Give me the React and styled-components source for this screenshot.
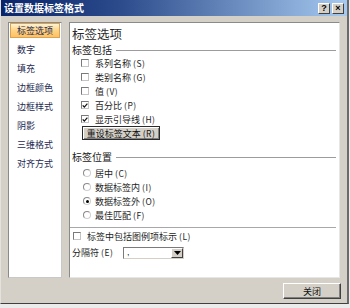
import React from "react";
import styled, { createGlobalStyle } from "styled-components";

const GlobalStyle = createGlobalStyle`
  html, body {
    margin: 0;
    padding: 0;
    background: #ebebeb;
  }
  body {
    font-family: "Noto Sans CJK SC", "Liberation Sans", sans-serif;
    color: #1c1c1c;
  }
  * {
    box-sizing: border-box;
  }
`;

const navItems = ["标签选项", "数字", "填充", "边框颜色", "边框样式", "阴影", "三维格式", "对齐方式"];

const includeOptions = [
  { label: "系列名称", key: "S", checked: false },
  { label: "类别名称", key: "G", checked: false },
  { label: "值", key: "V", checked: false },
  { label: "百分比", key: "P", checked: true },
  { label: "显示引导线", key: "H", checked: true },
];

const positions = [
  { label: "居中", key: "C", selected: false },
  { label: "数据标签内", key: "I", selected: false },
  { label: "数据标签外", key: "O", selected: true },
  { label: "最佳匹配", key: "F", selected: false },
];

function CheckBox({ checked }) {
  return (
    <Box>
      {checked && (
        <svg width="7" height="7" viewBox="0 0 7 7">
          <path d="M0.8 3.4 L2.7 5.3 L6.3 1.2" fill="none" stroke="#111" strokeWidth="1.4" />
        </svg>
      )}
    </Box>
  );
}

function Radio({ selected }) {
  return <RadioDot>{selected && <Dot />}</RadioDot>;
}

function Key({ k }) {
  return <Mnemonic>({k})</Mnemonic>;
}

export default function App() {
  return (
    <>
      <GlobalStyle />
      <Window>
        <TitleBar>
          <TitleText>设置数据标签格式</TitleText>
          <TitleButtons>
            <TitleButton>?</TitleButton>
            <TitleButton>×</TitleButton>
          </TitleButtons>
        </TitleBar>

        <Body>
          <Nav>
            {navItems.map((item, i) => (
              <NavItem key={item}>
                <NavPill $active={i === 0}>{item}</NavPill>
              </NavItem>
            ))}
          </Nav>

          <Panel>
            <PanelTitle>标签选项</PanelTitle>

            <GroupHeader $top={2}>标签包括</GroupHeader>
            {includeOptions.map((o) => (
              <OptionRow key={o.key}>
                <CheckBox checked={o.checked} />
                <span>
                  {o.label}
                  <Key k={o.key} />
                </span>
              </OptionRow>
            ))}
            <ResetButton>
              重设标签文本<Key k="R" />
            </ResetButton>

            <GroupHeader $top={11}>标签位置</GroupHeader>
            <RadioList>
              {positions.map((p) => (
                <OptionRow key={p.key}>
                  <Radio selected={p.selected} />
                  <span>
                    {p.label}
                    <Key k={p.key} />
                  </span>
                </OptionRow>
              ))}
            </RadioList>

            <Separator />

            <LegendRow>
              <CheckBox checked={false} />
              <span>
                标签中包括图例项标示<Key k="L" />
              </span>
            </LegendRow>

            <FieldRow>
              <FieldLabel>
                分隔符<Key k="E" />
              </FieldLabel>
              <Combo>
                <ComboValue>,</ComboValue>
                <ComboArrow>
                  <svg width="7" height="4" viewBox="0 0 7 4">
                    <path d="M0 0 H7 L3.5 4 Z" fill="#000" />
                  </svg>
                </ComboArrow>
              </Combo>
            </FieldRow>
          </Panel>
        </Body>

        <Footer>
          <CloseButton>关闭</CloseButton>
        </Footer>
      </Window>
    </>
  );
}

const Window = styled.div`
  display: flex;
  flex-direction: column;
  width: 349px;
  background: #d4d0c8;
  border-left: 1px solid #e4e2dc;
  border-right: 2px solid #6a6a6a;
  border-bottom: 1px solid #404040;
  padding-bottom: 4px;
`;

//Title
const TitleBar = styled.div`
  display: flex;
  height: 16px;
  padding: 0 3px 0 3px;
  align-items: center;
  justify-content: space-between;
  background: linear-gradient(90deg, #0a246a 0%, #2c4c8c 35%, #a6caf0 100%);
`;

const TitleText = styled.div`
  color: #fff;
  font-size: 10px;
  font-weight: 700;
  line-height: 16px;
`;

const TitleButtons = styled.div`
  display: flex;
  gap: 2px;
  align-items: center;
`;

const TitleButton = styled.div`
  display: flex;
  width: 12px;
  height: 11px;
  align-items: center;
  justify-content: center;
  background: #d4d0c8;
  border-top: 1px solid #fff;
  border-left: 1px solid #fff;
  border-right: 1px solid #404040;
  border-bottom: 1px solid #404040;
  font-family: "Liberation Sans", sans-serif;
  font-size: 9px;
  font-weight: 700;
  line-height: 9px;
  color: #000;
`;

//Body
const Body = styled.div`
  display: flex;
  gap: 7px;
  padding: 6px 7px 0 7px;
`;

const Nav = styled.div`
  display: flex;
  flex-direction: column;
  width: 54px;
  height: 256px;
  background: #fff;
  border: 1px solid #8a8a8a;
  border-right-color: #c8c8c8;
  border-bottom-color: #c8c8c8;
`;

const NavItem = styled.div`
  display: flex;
  height: 19px;
  align-items: flex-start;
`;

const NavPill = styled.div`
  flex: 1;
  height: 15px;
  margin: 0 1px;
  padding-left: 6px;
  font-size: 9px;
  line-height: 13px;
  color: #1d2a52;
  border: 1px solid ${(p) => (p.$active ? "#d9a355" : "transparent")};
  background: ${(p) =>
    p.$active ? "linear-gradient(#fff2d0 0%, #ffd58a 45%, #ffc060 100%)" : "transparent"};
`;

const Panel = styled.div`
  display: flex;
  flex-direction: column;
  flex: 1;
  height: 256px;
  padding: 2px 3px 0 2px;
  background: #fff;
  border: 1px solid #8a8a8a;
  border-right-color: #e6e6e6;
  border-bottom-color: #e6e6e6;
`;

const PanelTitle = styled.div`
  height: 17px;
  font-size: 12.5px;
  line-height: 17px;
  color: #2a2a2a;
`;

const GroupHeader = styled.div`
  display: flex;
  align-items: center;
  gap: 4px;
  height: 12px;
  margin-top: ${(p) => p.$top || 0}px;
  font-size: 10px;
  line-height: 12px;
  color: #222;

  &::after {
    content: "";
    flex: 1;
    height: 1px;
    background: #9c9c9c;
  }
`;

const OptionRow = styled.div`
  display: flex;
  height: 14px;
  align-items: center;
  gap: 6px;
  padding-left: 9px;
  font-size: 9px;
  color: #1c1c1c;

  &:first-of-type {
    margin-top: 1px;
  }
`;

const Mnemonic = styled.span`
  padding-left: 2px;
  letter-spacing: 0.5px;
  font-size: 8.5px;
`;

const Box = styled.div`
  display: flex;
  width: 8px;
  height: 8px;
  align-items: center;
  justify-content: center;
  background: #fff;
  border: 1px solid #7a7a7a;
  border-right-color: #c4c4c4;
  border-bottom-color: #c4c4c4;
`;

const RadioDot = styled.div`
  display: flex;
  width: 8px;
  height: 8px;
  margin-left: 1px;
  margin-right: -1px;
  align-items: center;
  justify-content: center;
  border-radius: 50%;
  background: #fff;
  border: 1px solid #8a8a8a;
  border-right-color: #d0d0d0;
  border-bottom-color: #d0d0d0;
`;

const Dot = styled.div`
  width: 3px;
  height: 3px;
  border-radius: 50%;
  background: #000;
`;

const ResetButton = styled.div`
  display: flex;
  width: 78px;
  height: 14px;
  margin-left: 10px;
  align-items: center;
  justify-content: center;
  background: #d4d0c8;
  border: 1px solid #2a2a2a;
  box-shadow: inset 1px 1px 0 #fff, inset -1px -1px 0 #808080;
  font-size: 9px;
  color: #111;
`;

const RadioList = styled.div`
  display: flex;
  flex-direction: column;
  margin-top: 2px;

  & > div {
    padding-left: 10px;
    gap: 5px;
  }
`;

const Separator = styled.div`
  height: 1px;
  margin: 5px 0 0 -2px;
  background: #a8a8a8;
`;

const LegendRow = styled.div`
  display: flex;
  height: 14px;
  align-items: center;
  gap: 6px;
  padding-left: 1px;
  margin-top: 1px;
  font-size: 9px;
  color: #1c1c1c;
`;

const FieldRow = styled.div`
  display: flex;
  align-items: center;
  margin-top: 3px;
  font-size: 9px;
  color: #1c1c1c;
`;

const FieldLabel = styled.div`
  width: 51px;
`;

const Combo = styled.div`
  display: flex;
  width: 61px;
  height: 12px;
  align-items: stretch;
  background: #fff;
  border: 1px solid #7a7a7a;
  border-right-color: #d4d0c8;
  border-bottom-color: #d4d0c8;
`;

const ComboValue = styled.div`
  flex: 1;
  padding-left: 3px;
  font-family: "Liberation Sans", sans-serif;
  font-size: 9px;
  line-height: 8px;
`;

const ComboArrow = styled.div`
  display: flex;
  width: 12px;
  align-items: center;
  justify-content: center;
  background: #d4d0c8;
  border-top: 1px solid #fff;
  border-left: 1px solid #fff;
  border-right: 1px solid #404040;
  border-bottom: 1px solid #404040;
`;

//Footer
const Footer = styled.div`
  display: flex;
  justify-content: flex-end;
  padding: 5px 6px 0 0;
`;

const CloseButton = styled.div`
  display: flex;
  width: 58px;
  height: 16px;
  align-items: center;
  justify-content: center;
  background: #d4d0c8;
  border-top: 1px solid #fff;
  border-left: 1px solid #fff;
  border-right: 1px solid #404040;
  border-bottom: 1px solid #404040;
  box-shadow: inset -1px -1px 0 #808080;
  font-size: 9px;
  color: #111;
`;
